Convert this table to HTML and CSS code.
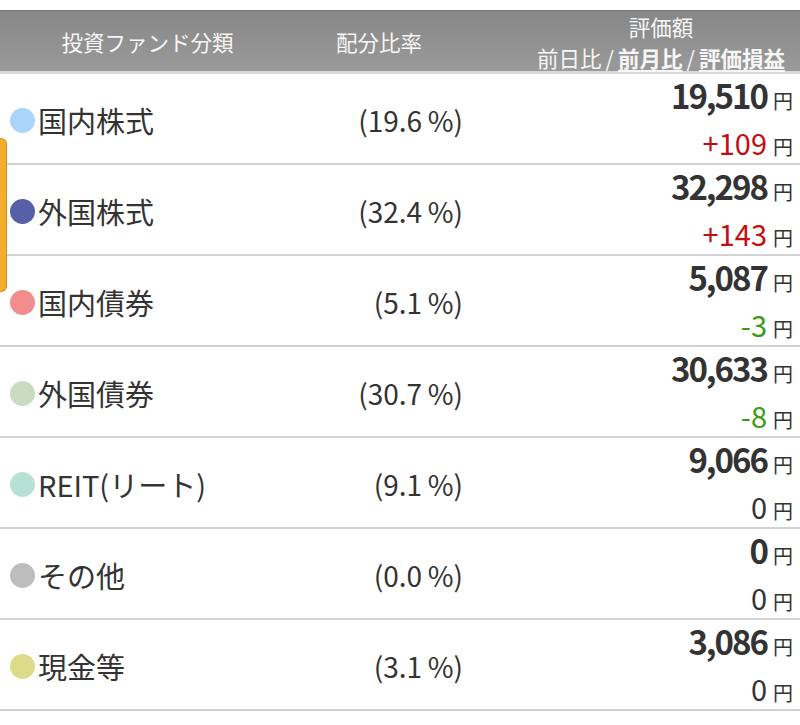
FILE: index.html
```html
<!DOCTYPE html>
<html lang="ja">
<head>
<meta charset="utf-8">
<link rel="stylesheet" href="styles.css">
</head>
<body>
<div class="page">
  <div class="head">
    <div class="h-name">投資ファンド分類</div>
    <div class="h-pct">配分比率</div>
    <div class="h-val">
      <div class="h-val-inner">
        <div>評価額</div>
        <div>前日比<span class="slash">/</span><span class="sel">前月比</span><span class="slash">/</span><span class="sel">評価損益</span></div>
      </div>
    </div>
  </div>

  <div class="row">
    <div class="name"><span class="dot c1"></span>国内株式</div>
    <div class="pct">(19.6&#8201;%)</div>
    <div class="val"><div class="main">19,510<span class="yen">円</span></div><div class="sub up">+109<span class="yen">円</span></div></div>
  </div>
  <div class="row">
    <div class="name"><span class="dot c2"></span>外国株式</div>
    <div class="pct">(32.4&#8201;%)</div>
    <div class="val"><div class="main">32,298<span class="yen">円</span></div><div class="sub up">+143<span class="yen">円</span></div></div>
  </div>
  <div class="row">
    <div class="name"><span class="dot c3"></span>国内債券</div>
    <div class="pct">(5.1&#8201;%)</div>
    <div class="val"><div class="main">5,087<span class="yen">円</span></div><div class="sub down">-3<span class="yen">円</span></div></div>
  </div>
  <div class="row">
    <div class="name"><span class="dot c4"></span>外国債券</div>
    <div class="pct">(30.7&#8201;%)</div>
    <div class="val"><div class="main">30,633<span class="yen">円</span></div><div class="sub down">-8<span class="yen">円</span></div></div>
  </div>
  <div class="row">
    <div class="name"><span class="dot c5"></span>REIT(リート)</div>
    <div class="pct">(9.1&#8201;%)</div>
    <div class="val"><div class="main">9,066<span class="yen">円</span></div><div class="sub">0<span class="yen">円</span></div></div>
  </div>
  <div class="row">
    <div class="name"><span class="dot c6"></span>その他</div>
    <div class="pct">(0.0&#8201;%)</div>
    <div class="val"><div class="main">0<span class="yen">円</span></div><div class="sub">0<span class="yen">円</span></div></div>
  </div>
  <div class="row">
    <div class="name"><span class="dot c7"></span>現金等</div>
    <div class="pct">(3.1&#8201;%)</div>
    <div class="val"><div class="main">3,086<span class="yen">円</span></div><div class="sub">0<span class="yen">円</span></div></div>
  </div>

  <div class="scroll-tab"></div>
</div>
</body>
</html>
```

FILE: styles.css
```css
html, body {
  margin: 0;
  padding: 0;
  background: #fff;
}
body {
  font-family: "Noto Sans CJK JP", "Noto Sans", sans-serif;
  color: #333;
}
.page {
  position: relative;
  padding-top: 10px;
  width: 800px;
}
.head {
  display: grid;
  grid-template-columns: 295px 168px 1fr;
  height: 60px;
  background: linear-gradient(#878787, #9a9a9a);
  border-top: 1px solid #7a7a7a;
  border-bottom: 3px solid #d9d9d9;
  color: #f6f6f6;
  font-size: 21.5px;
}
.h-name, .h-pct {
  display: flex;
  align-items: center;
  justify-content: center;
  padding-bottom: 2px;
}
.h-val {
  display: flex;
  justify-content: flex-end;
  align-items: center;
  padding-right: 15px;
}
.h-val-inner {
  text-align: center;
  line-height: 31px;
}
.slash {
  margin: 0 4px;
}
.sel {
  font-weight: 700;
  text-decoration: underline;
  text-underline-offset: 3px;
  text-decoration-thickness: 2px;
}
.row {
  display: grid;
  grid-template-columns: 295px 168px 1fr;
  height: 89px;
  border-bottom: 2px solid #d2d2d2;
}
.name {
  display: flex;
  align-items: center;
  padding-left: 10px;
  font-size: 29px;
  gap: 3px;
  padding-bottom: 4px;
}
.dot {
  width: 25px;
  height: 25px;
  border-radius: 50%;
  flex: none;
  margin-top: 1px;
}
.c1 { background: #a9d5fa; }
.c2 { background: #5560a8; }
.c3 { background: #f38c8c; }
.c4 { background: #c8dcc2; }
.c5 { background: #b8e1d6; }
.c6 { background: #bdbdbd; }
.c7 { background: #dcdc88; }
.pct {
  display: flex;
  align-items: center;
  justify-content: flex-end;
  font-size: 28px;
  padding-bottom: 4px;
}
.val {
  display: flex;
  flex-direction: column;
  align-items: flex-end;
  justify-content: center;
  padding-right: 7px;
  padding-bottom: 2px;
}
.main {
  font-size: 33px;
  font-weight: 700;
  line-height: 42px;
  letter-spacing: -2px;
  color: #333;
}
.sub {
  font-size: 29px;
  line-height: 40px;
  color: #333;
}
.up { color: #c40f0f; }
.down { color: #3d9a12; }
.yen {
  font-size: 20px;
  font-weight: 400;
  margin-left: 6px;
  letter-spacing: 0;
  color: #333;
}
.scroll-tab {
  position: absolute;
  left: 0;
  top: 138px;
  width: 6px;
  height: 152px;
  background: #f6ad2f;
  border: 1px solid #d2900f;
  border-left: none;
  border-radius: 0 6px 6px 0;
}
```
